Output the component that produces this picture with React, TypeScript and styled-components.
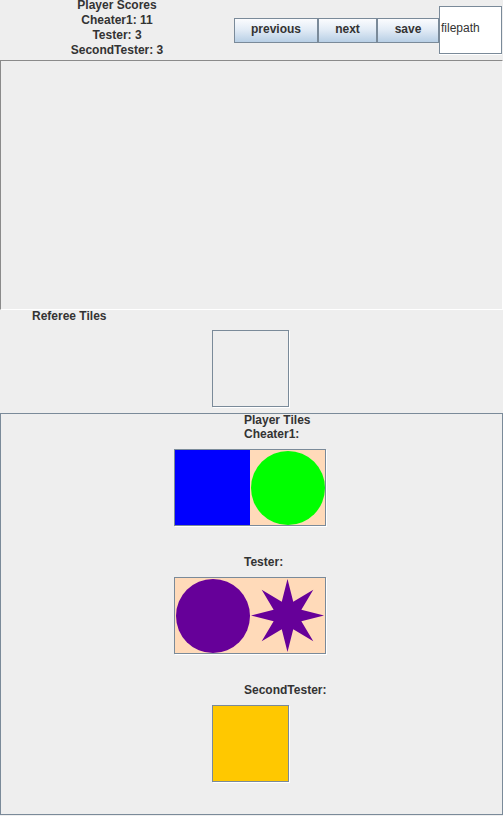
import React from "react";
import styled, { createGlobalStyle } from "styled-components";

const Global = createGlobalStyle`
  html, body { margin: 0; padding: 0; background: #eeeeee; }
  * { box-sizing: border-box; }
`;

const Frame = styled.div`
  width: 503px;
  height: 816px;
  background: #eeeeee;
  font-family: "Liberation Sans", Arial, sans-serif;
  color: #333333;
  display: flex;
  flex-direction: column;
  overflow: hidden;
`;

const TopBar = styled.div`
  height: 60px;
  display: flex;
  align-items: flex-start;
`;

const Scores = styled.div`
  width: 234px;
  margin-top: -2px;
  text-align: center;
  font-weight: bold;
  font-size: 12px;
  line-height: 15px;
`;

const ButtonGroup = styled.div`
  display: flex;
  margin-top: 18px;
`;

const ToolButton = styled.button<{ $w: number }>`
  width: ${(p) => p.$w}px;
  height: 25px;
  padding: 0 0 3px 0;
  margin: 0;
  border: 1px solid #7a8a99;
  background: linear-gradient(to bottom, #fbfcfe 0%, #e3ecf6 45%, #b8cfe5 100%);
  font-family: "Liberation Sans", Arial, sans-serif;
  font-weight: bold;
  font-size: 12px;
  color: #333333;
  line-height: 20px;
`;

const FileField = styled.div`
  margin-top: 6px;
  width: 63px;
  height: 48px;
  background: #ffffff;
  border: 1px solid #7a8a99;
  box-shadow: 0 1px 0 #ffffff;
  font-size: 12px;
  line-height: 42px;
  padding-left: 1px;
  color: #333333;
`;

const Canvas = styled.div`
  height: 250px;
  border-top: 1px solid #8a8a8a;
  border-left: 1px solid #8a8a8a;
  border-bottom: 1px solid #ffffff;
  border-right: 1px solid #ffffff;
`;

const RefereeSection = styled.div`
  height: 103px;
  display: flex;
  flex-direction: column;
`;

const SectionLabel = styled.div<{ $left: number }>`
  padding-left: ${(p) => p.$left}px;
  font-weight: bold;
  font-size: 12px;
  line-height: 14px;
  margin-top: -1px;
`;

const TileBox = styled.div`
  display: flex;
  align-self: center;
  border: 1px solid #7a8a99;
  box-shadow: 1px 1px 0 #ffffff;
  min-width: 77px;
  height: 77px;
  background: transparent;
`;

const RefereeBoxWrap = styled.div`
  display: flex;
  justify-content: center;
  padding-right: 2px;
  margin-top: 7px;
`;

const PlayerPanel = styled.div`
  height: 402px;
  border: 1px solid #7a8a99;
  display: flex;
  flex-direction: column;
`;

const PlayerBlock = styled.div<{ $top: number }>`
  display: flex;
  flex-direction: column;
  margin-top: ${(p) => p.$top}px;
`;

const RowWrap = styled.div`
  display: flex;
  justify-content: center;
  padding-right: 3px;
  margin-top: 8px;
`;

const Cell = styled.div`
  width: 75px;
  height: 75px;
  background: #ffdab9;
  display: block;
`;

type Shape = "square" | "circle" | "star";

function starPoints(cx: number, cy: number, ro: number, ri: number, n: number) {
  const pts: string[] = [];
  for (let i = 0; i < n * 2; i++) {
    const r = i % 2 === 0 ? ro : ri;
    const a = (Math.PI / n) * i - Math.PI / 2;
    pts.push(`${(cx + r * Math.cos(a)).toFixed(2)},${(cy + r * Math.sin(a)).toFixed(2)}`);
  }
  return pts.join(" ");
}

const Tile = ({ shape, color }: { shape: Shape; color: string }) => (
  <Cell>
    <svg width="75" height="75" viewBox="0 0 75 75">
      {shape === "square" && <rect x="0" y="0" width="75" height="75" fill={color} />}
      {shape === "circle" && <circle cx="38" cy="38" r="37" fill={color} />}
      {shape === "star" && <polygon points={starPoints(37.5, 37.5, 36.5, 15, 8)} fill={color} />}
    </svg>
  </Cell>
);

const players: { name: string; top: number; tiles: { shape: Shape; color: string }[] }[] = [
  {
    name: "Cheater1:",
    top: 1,
    tiles: [
      { shape: "square", color: "#0000ff" },
      { shape: "circle", color: "#00ff00" },
    ],
  },
  {
    name: "Tester:",
    top: 30,
    tiles: [
      { shape: "circle", color: "#660099" },
      { shape: "star", color: "#660099" },
    ],
  },
  {
    name: "SecondTester:",
    top: 30,
    tiles: [{ shape: "square", color: "#ffc800" }],
  },
];

export default function App() {
  return (
    <>
      <Global />
      <Frame>
        <TopBar>
          <Scores>
            <div>Player Scores</div>
            <div>Cheater1: 11</div>
            <div>Tester: 3</div>
            <div>SecondTester: 3</div>
          </Scores>
          <ButtonGroup>
            <ToolButton $w={84}>previous</ToolButton>
            <ToolButton $w={59}>next</ToolButton>
            <ToolButton $w={62}>save</ToolButton>
          </ButtonGroup>
          <FileField>filepath</FileField>
        </TopBar>
        <Canvas />
        <RefereeSection>
          <SectionLabel $left={32}>Referee Tiles</SectionLabel>
          <RefereeBoxWrap>
            <TileBox />
          </RefereeBoxWrap>
        </RefereeSection>
        <PlayerPanel>
          <SectionLabel $left={243}>Player Tiles</SectionLabel>
          {players.map((p) => (
            <PlayerBlock key={p.name} $top={p.top}>
              <SectionLabel $left={243}>{p.name}</SectionLabel>
              <RowWrap>
                <TileBox>
                  {p.tiles.map((t, i) => (
                    <Tile key={i} shape={t.shape} color={t.color} />
                  ))}
                </TileBox>
              </RowWrap>
            </PlayerBlock>
          ))}
        </PlayerPanel>
      </Frame>
    </>
  );
}
